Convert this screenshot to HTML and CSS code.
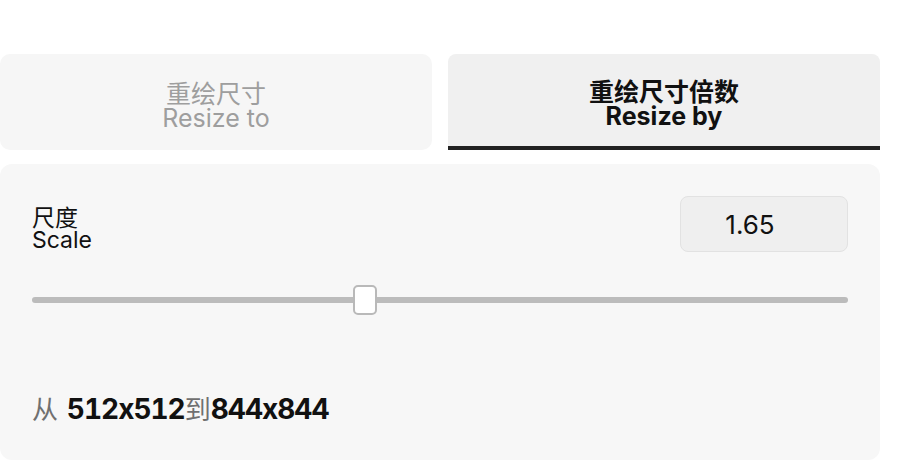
FILE: index.html
```html
<!DOCTYPE html>
<html lang="zh">
<head>
<meta charset="utf-8">
<title>Resize</title>
<link rel="stylesheet" href="styles.css">
</head>
<body>
<div class="page">
  <div class="tabs">
    <div class="tab">
      <span class="zh">重绘尺寸</span>
      <span class="en">Resize to</span>
    </div>
    <div class="tab active">
      <span class="zh">重绘尺寸倍数</span>
      <span class="en">Resize by</span>
    </div>
  </div>
  <div class="panel">
    <div class="row">
      <div class="label">
        <span class="zh">尺度</span>
        <span class="en">Scale</span>
      </div>
      <div class="input">1.65</div>
    </div>
    <div class="slider">
      <div class="track"></div>
      <div class="thumb" style="left: 39.3%;"></div>
    </div>
    <div class="result">
      <span class="muted from">从 </span><b>512x512</b><span class="muted">到</span><b>844x844</b>
    </div>
  </div>
</div>
</body>
</html>
```

FILE: styles.css
```css
html, body {
  margin: 0;
  padding: 0;
  background: #ffffff;
}
body {
  font-family: Inter, "Noto Sans CJK SC", sans-serif;
  color: #111111;
}
.page {
  width: 880px;
  padding-top: 54px;
  display: flex;
  flex-direction: column;
  gap: 14px;
}
.tabs {
  display: flex;
  gap: 16px;
}
.tab {
  flex: 1;
  height: 96px;
  box-sizing: border-box;
  padding-top: 6px;
  background: #f6f6f6;
  border-radius: 10px;
  display: flex;
  flex-direction: column;
  align-items: center;
  justify-content: center;
  color: #9e9e9e;
  font-size: 25px;
  line-height: 26px;
}
.tab.active {
  background: #f0f0f0;
  border-radius: 8px 8px 0 0;
  border-bottom: 4px solid #222222;
  padding-top: 5px;
  color: #111111;
  font-weight: 700;
}
.tab .zh, .label .zh {
  font-family: "Noto Sans CJK SC", sans-serif;
}
.panel {
  background: #f7f7f7;
  border-radius: 12px;
  height: 296px;
  box-sizing: border-box;
  padding: 32px 32px 0 32px;
  display: flex;
  flex-direction: column;
}
.row {
  display: flex;
  justify-content: space-between;
  align-items: center;
  height: 56px;
}
.label {
  display: flex;
  flex-direction: column;
  font-size: 23px;
  line-height: 24px;
  padding-top: 8px;
  color: #111111;
}
.input {
  width: 168px;
  height: 56px;
  box-sizing: border-box;
  padding-right: 28px;
  background: #efefef;
  border: 1.5px solid #e2e2e2;
  border-radius: 8px;
  display: flex;
  align-items: center;
  justify-content: center;
  font-size: 26px;
  color: #111111;
}
.slider {
  position: relative;
  height: 30px;
  margin-top: 33px;
  display: flex;
  align-items: center;
}
.track {
  flex: 1;
  height: 6px;
  border-radius: 3px;
  background: #bcbcbc;
}
.thumb {
  position: absolute;
  top: 0;
  width: 24px;
  height: 30px;
  box-sizing: border-box;
  background: #ffffff;
  border: 2px solid #b9b9b9;
  border-radius: 5px;
}
.result {
  margin-top: 77px;
  font-size: 26px;
  line-height: 32px;
  color: #111111;
}
.result .muted {
  font-family: "Noto Sans CJK SC", sans-serif;
  color: #707070;
}
.result .from {
  margin-right: 3px;
}
.result b {
  font-size: 28px;
  font-weight: 700;
  font-variant-numeric: tabular-nums;
  letter-spacing: -1px;
}
```
